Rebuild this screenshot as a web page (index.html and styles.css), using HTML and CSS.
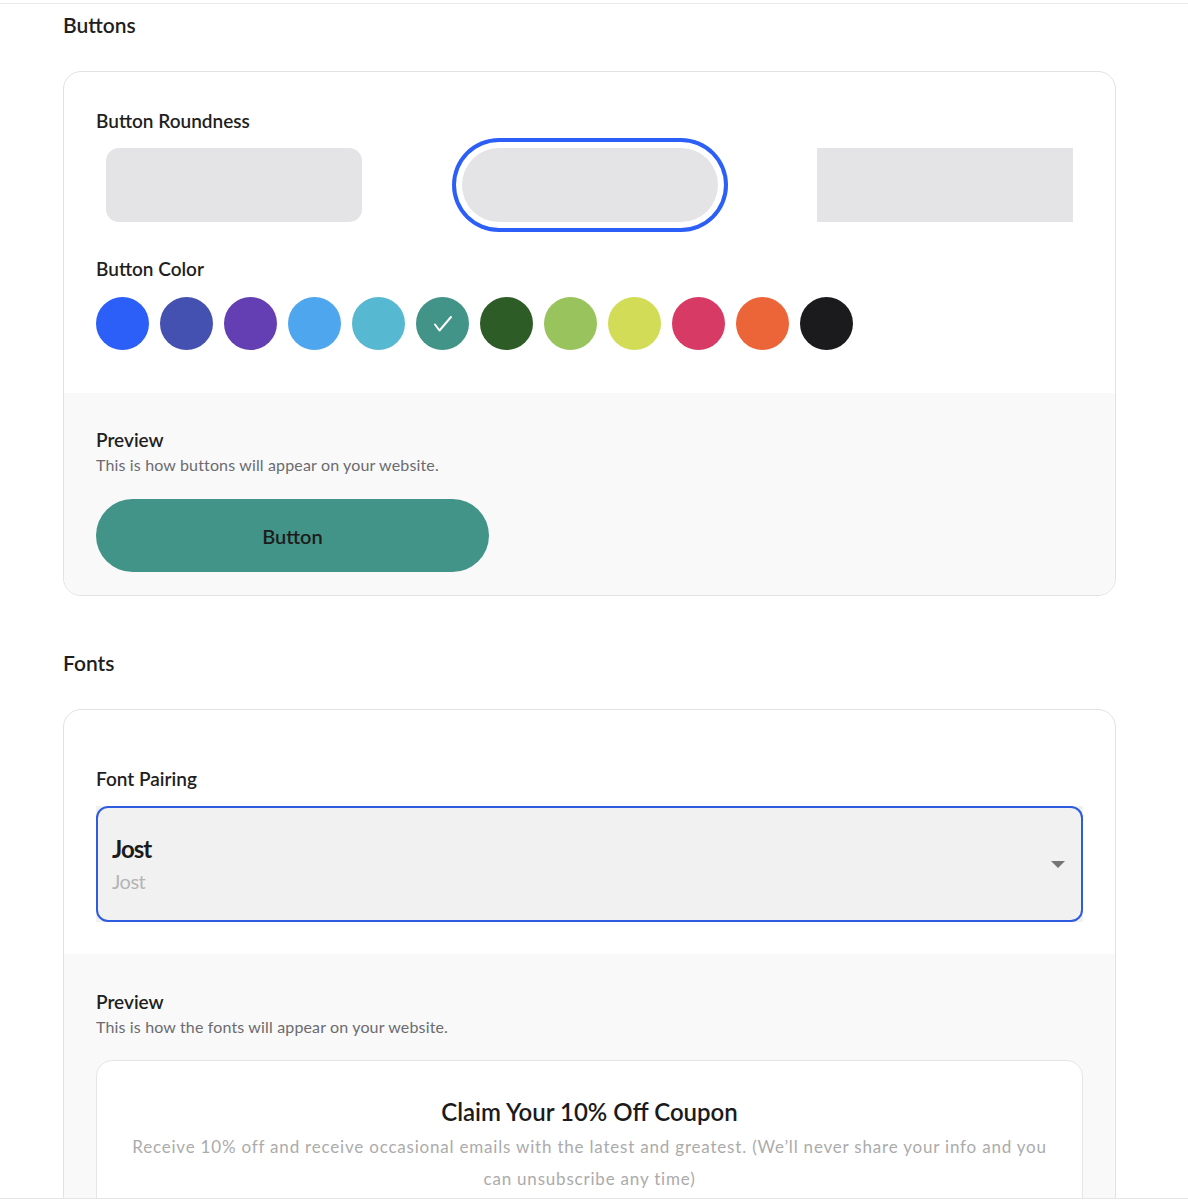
FILE: index.html
```html
<!DOCTYPE html>
<html lang="en">
<head>
    <meta charset="UTF-8">
    <meta name="viewport" content="width=device-width, initial-scale=1.0">
    <title>Theme Settings</title>
    <link rel="stylesheet" href="styles.css">
</head>
<body>
    <div class="page">
        <div class="topbar"></div>

        <div class="settings">
            <!-- Buttons -->
            <h2 class="section-title">Buttons</h2>
            <div class="card">
                <div class="card-body">
                    <h4 class="field-label">Button Roundness</h4>
                    <div class="roundness">
                        <div class="round-option"><div class="round-swatch r-soft"></div></div>
                        <div class="round-option selected"><div class="round-swatch r-pill"></div></div>
                        <div class="round-option"><div class="round-swatch r-square"></div></div>
                    </div>

                    <h4 class="field-label color-label">Button Color</h4>
                    <div class="colors">
                        <span class="dot" style="background:#2b5ff7"></span>
                        <span class="dot" style="background:#4451b0"></span>
                        <span class="dot" style="background:#633fb3"></span>
                        <span class="dot" style="background:#4da6ee"></span>
                        <span class="dot" style="background:#57b8d1"></span>
                        <span class="dot active" style="background:#429488">
                            <svg width="26" height="26" viewBox="0 0 26 26"><path d="M5 13.5l4.5 6L21 6" fill="none" stroke="#fff" stroke-width="2" stroke-linecap="round" stroke-linejoin="round"/></svg>
                        </span>
                        <span class="dot" style="background:#2e5c27"></span>
                        <span class="dot" style="background:#99c35d"></span>
                        <span class="dot" style="background:#d2dc57"></span>
                        <span class="dot" style="background:#d73a65"></span>
                        <span class="dot" style="background:#ec6538"></span>
                        <span class="dot" style="background:#1b1b1d"></span>
                    </div>
                </div>
                <div class="card-preview">
                    <h4 class="preview-title">Preview</h4>
                    <p class="preview-sub">This is how buttons will appear on your website.</p>
                    <button class="demo-button" type="button">Button</button>
                </div>
            </div>

            <!-- Fonts -->
            <h2 class="section-title">Fonts</h2>
            <div class="card">
                <div class="card-body fonts-body">
                    <h4 class="field-label">Font Pairing</h4>
                    <div class="select-wrap">
                        <div class="select">
                            <div class="select-text">
                                <span class="font-main">Jost</span>
                                <span class="font-sub">Jost</span>
                            </div>
                            <span class="caret"></span>
                        </div>
                    </div>
                </div>
                <div class="card-preview fonts-preview">
                    <h4 class="preview-title">Preview</h4>
                    <p class="preview-sub">This is how the fonts will appear on your website.</p>
                    <div class="coupon">
                        <h3>Claim Your 10% Off Coupon</h3>
                        <p>Receive 10% off and receive occasional emails with the latest and greatest. (We’ll never share your info and you can unsubscribe any time)</p>
                    </div>
                </div>
            </div>
        </div>
    </div>
</body>
</html>
```

FILE: styles.css
```css
/* Page */
html, body {
    margin: 0;
    padding: 0;
    background: #fff;
    font-family: "Lato", "Noto Sans", sans-serif;
    color: #1f1f22;
}

.page {
    height: 1198px;
    overflow: hidden;
    border-bottom: 1px solid #e6e6e6;
}

.topbar {
    height: 3px;
    border-bottom: 1px solid #ebebeb;
}

.settings {
    width: 1053px;
    margin-left: 63px;
}

/* Section headings */
.section-title {
    margin: 7px 0 32px;
    font-size: 21px;
    line-height: 28px;
    font-weight: 600;
}

.card + .section-title {
    margin-top: 53px;
}

/* Card */
.card {
    border: 1px solid #e2e2e2;
    border-radius: 18px;
    overflow: hidden;
}

.card-body {
    padding: 37px 32px 43px;
}

.field-label {
    margin: 0;
    font-size: 19px;
    line-height: 24px;
    font-weight: 600;
}

/* Roundness picker */
.roundness {
    display: flex;
    justify-content: space-between;
    margin-top: 5px;
}

.round-option {
    width: 276px;
    height: 94px;
    padding: 10px;
    box-sizing: border-box;
    border-radius: 50px;
}

.round-option.selected {
    box-shadow: inset 0 0 0 4px #2b5ff7;
}

.round-swatch {
    height: 74px;
    background: #e4e4e7;
}

.r-soft { border-radius: 13px; }
.r-pill { border-radius: 40px; }
.r-square { border-radius: 0; }

/* Colour dots */
.color-label {
    margin-top: 25px;
}

.colors {
    display: flex;
    gap: 11px;
    margin-top: 16px;
}

.dot {
    width: 53px;
    height: 53px;
    border-radius: 50%;
    display: flex;
    align-items: center;
    justify-content: center;
}

/* Preview area */
.card-preview {
    background: #f9f9f9;
    padding: 35px 32px 23px;
}

.preview-title {
    margin: 0;
    font-size: 19px;
    line-height: 24px;
    font-weight: 600;
}

.preview-sub {
    margin: 3px 0 0;
    font-size: 16px;
    line-height: 20px;
    color: #6b6b70;
    letter-spacing: 0.15px;
}

.demo-button {
    display: block;
    width: 393px;
    height: 73px;
    margin-top: 24px;
    border: none;
    border-radius: 40px;
    background: #429488;
    color: #1c1c1c;
    font-family: inherit;
    font-size: 20px;
    font-weight: 600;
}

/* Fonts card */
.fonts-body {
    padding: 57px 32px 32px;
}

.select-wrap {
    margin-top: 15px;
    background: #f1f1f1;
}

.select {
    height: 116px;
    box-sizing: border-box;
    border: 2px solid #2f5be0;
    border-radius: 12px;
    display: flex;
    align-items: center;
    justify-content: space-between;
    padding: 0 16px 0 14px;
}

.select-text {
    display: flex;
    flex-direction: column;
}

.font-main {
    font-size: 24px;
    line-height: 32px;
    font-weight: 700;
    color: #1b1b1b;
    letter-spacing: -1px;
}

.font-sub {
    margin-top: 2px;
    font-size: 20px;
    line-height: 28px;
    color: #b5b5b5;
    letter-spacing: -0.5px;
}

.caret {
    width: 0;
    height: 0;
    border-left: 7px solid transparent;
    border-right: 7px solid transparent;
    border-top: 7px solid #757575;
}

.fonts-preview {
    padding-top: 36px;
}

.coupon {
    margin-top: 23px;
    background: #fff;
    border: 1px solid #e6e6e6;
    border-radius: 16px;
    padding: 35px 32px 40px;
    text-align: center;
}

.coupon h3 {
    margin: 0;
    font-size: 24px;
    line-height: 32px;
    font-weight: 600;
    color: #1b1b1b;
}

.coupon p {
    margin: 3px 0 0;
    font-size: 17px;
    line-height: 32px;
    color: #ababab;
    letter-spacing: 0.8px;
}
```
